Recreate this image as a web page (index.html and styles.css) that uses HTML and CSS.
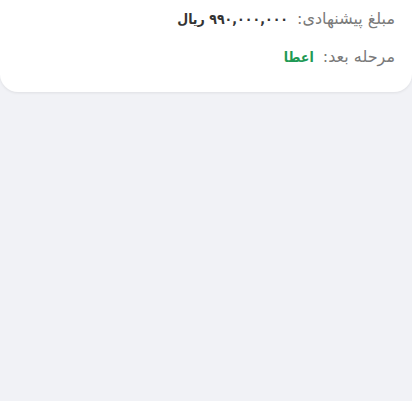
FILE: index.html
```html
<!DOCTYPE html>
<html lang="fa" dir="rtl">
<head>
    <meta charset="UTF-8">
    <meta name="viewport" content="width=device-width, initial-scale=1.0">
    <title>پیشنهاد</title>
    <link rel="stylesheet" href="styles.css">
</head>
<body>
    <section class="card">
        <div class="row">
            <span class="label">مبلغ پیشنهادی:</span>
            <span class="value">۹۹۰,۰۰۰,۰۰۰ ریال</span>
        </div>
        <div class="row">
            <span class="label">مرحله بعد:</span>
            <span class="value green">اعطا</span>
        </div>
    </section>
</body>
</html>
```

FILE: styles.css
```css
body {
    margin: 0;
    padding: 0;
    background-color: #f1f2f6;
    font-family: 'DejaVu Sans', 'Noto Sans', sans-serif;
    font-size: 16px;
    min-height: 401px;
}
.card {
    background-color: #ffffff;
    border-radius: 0 0 18px 18px;
    box-shadow: 0 1px 3px rgba(0, 0, 0, 0.08);
    padding: 6px 17px 22px;
    display: flex;
    flex-direction: column;
    gap: 12px;
}
.row {
    display: flex;
    align-items: baseline;
    gap: 9px;
    line-height: 26px;
}
.label {
    color: #7a7a7a;
}
.value {
    color: #333333;
    font-family: 'DejaVu Sans Condensed', 'DejaVu Sans', sans-serif;
    font-size: 14px;
    font-weight: bold;
}
.value.green {
    color: #1f9a55;
}
```
